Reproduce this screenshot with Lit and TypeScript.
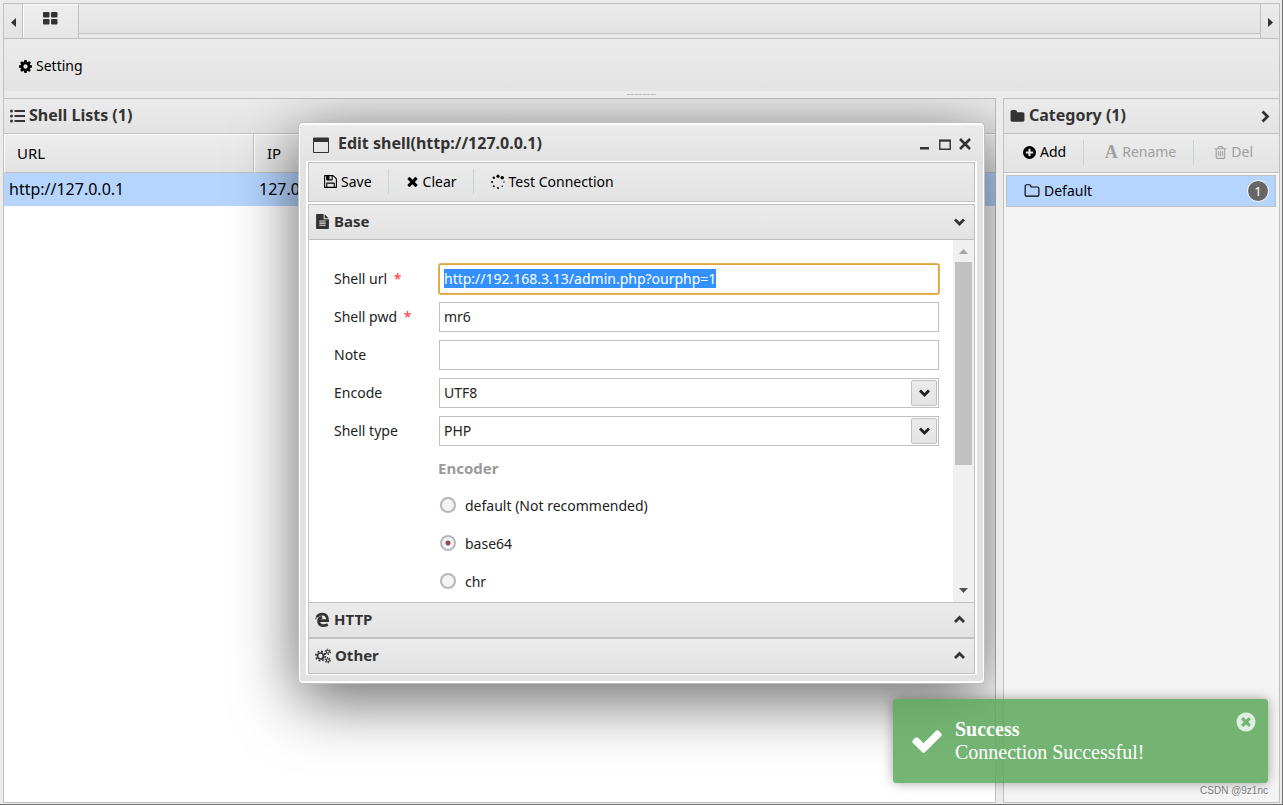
import { LitElement, html, css, svg } from "lit";
import { customElement, state, query } from "lit/decorators.js";

const DISC =
  "m387-226q0 209-103 385.5t-279.5 279.5-385.5 103-385.5-103-279.5-279.5-103-385.5 103-385.5 279.5-279.5 385.5-103 385.5 103 279.5 279.5 103 385.5z";

const PATHS: Record<string, string> = {
  cog: "M1152 896q0-106-75-181t-181-75-181 75-75 181 75 181 181 75 181-75 75-181zm512-109v222q0 12-8 23t-20 13l-185 28q-19 54-39 91 35 50 107 138 10 12 10 25t-9 23q-27 37-99 108t-94 71q-12 0-26-9l-138-108q-44 23-91 38-16 136-29 186-7 28-36 28h-222q-14 0-24.5-8.5t-11.5-21.5l-28-184q-49-16-90-37l-141 107q-10 9-25 9-14 0-25-11-126-114-165-168-7-10-7-23 0-12 8-23 15-21 51-66.5t54-70.5q-27-50-41-99l-183-27q-13-2-21-12.5t-8-23.5v-222q0-12 8-23t19-13l186-28q14-46 39-92-40-57-107-138-10-12-10-24 0-10 9-23 26-36 98.5-107.5t94.5-71.5q13 0 26 10l138 107q44-23 91-38 16-136 29-186 7-28 36-28h222q14 0 24.5 8.5t11.5 21.5l28 184q49 16 90 37l142-107q9-9 24-9 13 0 25 10 129 119 165 170 7 8 7 22 0 12-8 23-15 21-51 66.5t-54 70.5q26 50 41 98l183 28q13 2 21 12.5t8 23.5z",
  times: "M1490 1322q0 40-28 68l-136 136q-28 28-68 28t-68-28l-294-294-294 294q-28 28-68 28t-68-28l-136-136q-28-28-28-68t28-68l294-294-294-294q-28-28-28-68t28-68l136-136q28-28 68-28t68 28l294 294 294-294q28-28 68-28t68 28l136 136q28 28 28 68t-28 68l-294 294 294 294q28 28 28 68z",
  check: "M1671 566q0 40-28 68l-724 724-136 136q-28 28-68 28t-68-28l-136-136-362-362q-28-28-28-68t28-68l136-136q28-28 68-28t68 28l294 295 656-657q28-28 68-28t68 28l136 136q28 28 28 68z",
  folder: "M1728 608v704q0 92-66 158t-158 66h-1216q-92 0-158-66t-66-158v-960q0-92 66-158t158-66h320q92 0 158 66t66 158v32h672q92 0 158 66t66 158z",
  folderOpen: "M1600 1312v-704q0-40-28-68t-68-28h-704q-40 0-68-28t-28-68v-64q0-40-28-68t-68-28h-320q-40 0-68 28t-28 68v960q0 40 28 68t68 28h1216q40 0 68-28t28-68zm128-704v704q0 92-66 158t-158 66h-1216q-92 0-158-66t-66-158v-960q0-92 66-158t158-66h320q92 0 158 66t66 158v32h672q92 0 158 66t66 158z",
  plusCircle: "M1344 960v-128q0-26-19-45t-45-19h-256v-256q0-26-19-45t-45-19h-128q-26 0-45 19t-19 45v256h-256q-26 0-45 19t-19 45v128q0 26 19 45t45 19h256v256q0 26 19 45t45 19h128q26 0 45-19t19-45v-256h256q26 0 45-19t19-45zm320-64q0 209-103 385.5t-279.5 279.5-385.5 103-385.5-103-279.5-279.5-103-385.5 103-385.5 279.5-279.5 385.5-103 385.5 103 279.5 279.5 103 385.5z",
  timesCircle: "M1277 1122q0-26-19-45l-181-181 181-181q19-19 19-45 0-27-19-46l-90-90q-19-19-46-19-26 0-45 19l-181 181-181-181q-19-19-45-19-27 0-46 19l-90 90q-19 19-19 46 0 26 19 45l181 181-181 181q-19 19-19 45 0 27 19 46l90 90q19 19 46 19 26 0 45-19l181-181 181 181q19 19 45 19 27 0 46-19l90-90q19-19 19-46z" + DISC,
  trash: "M704 736v576q0 14-9 23t-23 9h-64q-14 0-23-9t-9-23v-576q0-14 9-23t23-9h64q14 0 23 9t9 23zm256 0v576q0 14-9 23t-23 9h-64q-14 0-23-9t-9-23v-576q0-14 9-23t23-9h64q14 0 23 9t9 23zm256 0v576q0 14-9 23t-23 9h-64q-14 0-23-9t-9-23v-576q0-14 9-23t23-9h64q14 0 23 9t9 23zm128 724v-948h-896v948q0 22 7 40.5t14.5 27 10.5 8.5h832q3 0 10.5-8.5t14.5-27 7-40.5zm-672-1076h448l-48-117q-7-9-17-11h-317q-10 2-17 11zm928 32v64q0 14-9 23t-23 9h-96v948q0 83-47 143.5t-113 60.5h-832q-66 0-113-58.5t-47-141.5v-952h-96q-14 0-23-9t-9-23v-64q0-14 9-23t23-9h309l70-167q15-37 54-63t79-26h320q40 0 79 26t54 63l70 167h309q14 0 23 9t9 23z",
  floppy: "M512 1536h768v-384h-768v384zm896 0h128v-896q0-14-10-38.5t-20-34.5l-281-281q-10-10-34-20t-39-10v416q0 40-28 68t-68 28h-576q-40 0-68-28t-28-68v-416h-128v1280h128v-416q0-40 28-68t68-28h832q40 0 68 28t28 68v416zm-384-928v-320q0-13-9.5-22.5t-22.5-9.5h-192q-13 0-22.5 9.5t-9.5 22.5v320q0 13 9.5 22.5t22.5 9.5h192q13 0 22.5-9.5t9.5-22.5zm640 32v928q0 40-28 68t-68 28h-1344q-40 0-68-28t-28-68v-1344q0-40 28-68t68-28h928q40 0 88 20t76 48l280 280q28 28 48 76t20 88z",
  fileText: "M1596 476q14 14 28 36h-472v-472q22 14 36 28zm-476 164h544v1056q0 40-28 68t-68 28h-1344q-40 0-68-28t-28-68v-1600q0-40 28-68t68-28h800v544q0 40 28 68t68 28zm160 736v-64q0-14-9-23t-23-9h-704q-14 0-23 9t-9 23v64q0 14 9 23t23 9h704q14 0 23-9t9-23zm0-256v-64q0-14-9-23t-23-9h-704q-14 0-23 9t-9 23v64q0 14 9 23t23 9h704q14 0 23-9t9-23zm0-256v-64q0-14-9-23t-23-9h-704q-14 0-23 9t-9 23v64q0 14 9 23t23 9h704q14 0 23-9t9-23z",
};

/** Solid icon on a 1792-unit grid. */
const icon = (name: string, size = 16) => html`<svg
  width=${size}
  height=${size}
  viewBox="0 0 1792 1792"
  fill="currentColor"
  aria-hidden="true"
>
  <path d=${PATHS[name]}></path>
</svg>`;

/** Thick chevron used by panel headers and drop-downs. */
const chevron = (dir: "up" | "down" | "right") => {
  const d = {
    up: "M2 9 L6.5 4.5 L11 9",
    down: "M2 4.5 L6.5 9 L11 4.5",
    right: "M4.5 1.5 L9.5 6.5 L4.5 11.5",
  }[dir];
  return html`<svg width="13" height="13" viewBox="0 0 13 13" fill="none" stroke="currentColor" stroke-width="2.8" aria-hidden="true">
    <path d=${d}></path>
  </svg>`;
};

const gear = (cx: number, cy: number, r: number, w: number, teeth: number) => {
  const step = (2 * Math.PI * (r + w)) / teeth;
  return svg`
    <circle cx=${cx} cy=${cy} r=${r} stroke-width=${w}></circle>
    <circle cx=${cx} cy=${cy} r=${r + w} stroke-width=${w} stroke-dasharray="${step / 2} ${step / 2}"></circle>`;
};

const cogsIcon = html`<svg width="16" height="16" viewBox="0 0 16 16" fill="none" stroke="currentColor" aria-hidden="true">
  ${gear(5.5, 8, 3, 1.7, 8)} ${gear(12.8, 3.8, 1.5, 1.1, 6)} ${gear(12.8, 12.2, 1.5, 1.1, 6)}
</svg>`;

const listIcon = html`<svg width="15" height="14" viewBox="0 0 15 14" fill="currentColor" aria-hidden="true">
  ${[2, 7, 12].map(
    (y) => svg`<circle cx="1.5" cy=${y} r="1.5"></circle><rect x="4.5" y=${y - 1} width="10.5" height="2"></rect>`
  )}
</svg>`;

const tilesIcon = html`<svg width="15" height="13" viewBox="0 0 15 13" fill="currentColor" aria-hidden="true">
  <rect x="0" y="0" width="6.5" height="5.5" rx="1"></rect>
  <rect x="8" y="0" width="6.5" height="5.5" rx="1"></rect>
  <rect x="0" y="7" width="6.5" height="5.5" rx="1"></rect>
  <rect x="8" y="7" width="6.5" height="5.5" rx="1"></rect>
</svg>`;

const spinnerIcon = html`<svg width="16" height="16" viewBox="0 0 16 16" fill="currentColor" aria-hidden="true">
  <circle cx="8" cy="2.2" r="1.6"></circle>
  <circle cx="12.2" cy="3.8" r="1.8"></circle>
  <circle cx="14" cy="8" r=".7"></circle>
  <circle cx="12.2" cy="12.2" r=".8"></circle>
  <circle cx="8" cy="13.9" r="1"></circle>
  <circle cx="3.8" cy="12.2" r="1"></circle>
  <circle cx="2.1" cy="8" r="1.1"></circle>
  <circle cx="3.8" cy="3.8" r="1.2"></circle>
</svg>`;

const browserIcon = html`<svg width="15" height="16" viewBox="0 0 15 16" fill="none" stroke="currentColor" aria-hidden="true">
  <path stroke-width="2.8" d="M4.2 8.6 H12.6 C12.8 4.6 10.8 2.2 7.6 2.2 C5 2.2 3.2 3.2 1.8 5"></path>
  <path stroke-width="2.8" d="M7 5 C4.4 6 3.4 7.8 3.6 9.6 C4 13.6 8.4 14.8 12.8 12.6"></path>
  <path stroke-width="1" d="M.7 7.4 C1 4.6 3.4 2.4 6 1.7"></path>
</svg>`;

const ENCODERS = ["default (Not recommended)", "base64", "chr"];

@customElement("app-root")
export class AppRoot extends LitElement {
  @state() private encoder = "base64";
  @state() private toastOpen = true;
  @query("#url") private urlField!: HTMLInputElement;

  static styles = css`
    :host {
      display: block;
      font: 14px/20px "Noto Sans", sans-serif;
      color: #000;
      --line: #c0c0c0;
      --bar: linear-gradient(#ebebeb, #e3e3e3);
      --select: #b5d5ff;
    }
    *, *::before, *::after { box-sizing: border-box; }
    button {
      font: inherit;
      color: inherit;
      background: none;
      border: 0;
      padding: 0;
      margin: 0;
      cursor: pointer;
    }
    svg { display: block; flex: none; }
    h1, h2 { margin: 0; font-size: 16px; line-height: 20px; font-weight: 700; color: #333; }

    .page {
      position: relative;
      display: flex;
      flex-direction: column;
      min-height: 100vh;
      padding: 3px 2px 1px 3px;
      background: #ebebeb;
      border-right: 1px solid #707070;
      border-bottom: 1px solid #707070;
    }

    .top { position: relative; z-index: 2; background: #ebebeb; border-right: 1px solid var(--line); border-left: 1px solid var(--line); }
    .tabs { display: flex; height: 36px; border-top: 1px solid var(--line); border-bottom: 1px solid var(--line); background: #e9e9e9; }
    .scroll { display: flex; align-items: center; justify-content: center; width: 19px; padding-top: 2px; color: #333; background: var(--bar); }
    .scroll.prev { border-right: 1px solid var(--line); }
    .scroll.next { border-left: 1px solid var(--line); }
    .tab { display: flex; justify-content: center; width: 56px; padding: 7px 2px 0 0; color: #333; background: linear-gradient(#ededed, #e6e6e6); border: 1px solid #fff; border-bottom: 0; border-right-color: var(--line); }
    .rail { flex: 1; height: 30px; background: var(--bar); border-bottom: 1px solid var(--line); }
    .ribbon { display: flex; align-items: center; height: 52px; padding: 2px 14px 0; background: var(--bar); }
    .setting { display: flex; align-items: center; gap: 3px; }
    .grip { display: flex; justify-content: center; align-items: center; height: 7px; background: #ebebeb; }
    .grip::before { content: ""; width: 29px; height: 1px; background: repeating-linear-gradient(90deg, #b8b8b8 0 3px, #dedede 3px 4px); }

    .main { display: flex; flex: 1; }
    .lists { flex: 1; min-width: 0; display: flex; flex-direction: column; background: #fff; border: 1px solid var(--line); }
    .side { position: relative; z-index: 2; display: flex; width: 284px; padding-left: 7px; background: #ebebeb; }
    .category { flex: 1; display: flex; flex-direction: column; background: #f4f4f4; border: 1px solid var(--line); }
    .head { display: flex; align-items: center; gap: 4px; height: 35px; padding: 0 8px 0 6px; color: #333; background: var(--bar); border-bottom: 1px solid var(--line); }
    .head h2 { padding-bottom: 2px; }
    .head .fold { margin-left: auto; }

    table { width: 100%; border-collapse: separate; border-spacing: 0; table-layout: fixed; font-size: 15px; line-height: 20px; }
    th, td { text-align: left; font-weight: 400; }
    th { height: 39px; padding: 0 0 1px 12px; background: linear-gradient(#ededed, #e3e3e3); border-top: 1px solid #fff; border-bottom: 1px solid var(--line); border-left: 1px solid #fff; }
    th.url { width: 250px; border-right: 1px solid var(--line); }
    td { height: 33px; padding: 0 5px 1px; font-size: 16px; background: var(--select); }

    .tools { display: flex; align-items: center; height: 39px; background: var(--bar); border-bottom: 1px solid var(--line); }
    .tools button { display: flex; align-items: center; gap: 3px; height: 25px; padding: 0 16px 0 17px; border-right: 1px solid #c7d3da; }
    .tools button:last-child { border-right: 0; }
    .tools button:disabled { color: #a0a0a0; cursor: default; }
    .tools .letter { width: 16px; text-align: center; font: 700 18px/20px "Liberation Serif", serif; }
    .category .tools { padding-bottom: 2px; }
    .category .tools button { padding: 0 17px 0 19px; }
    .category .tools button:first-child { padding-left: 18px; }
    .tree { margin: 0; padding: 1px 3px 1px 2px; list-style: none; border-top: 1px solid #fff; }
    .tree button { display: flex; align-items: center; gap: 4px; width: 100%; height: 32px; padding: 0 6px 0 17px; background: var(--select); border: 1px solid var(--line); }
    .count { display: grid; place-items: center; width: 22px; height: 22px; margin-left: auto; font-size: 13px; line-height: 13px; color: #fff; background: #666; border: 1px solid #fff; border-radius: 50%; }

    .layer { position: absolute; inset: 0; z-index: 1; display: flex; align-items: center; justify-content: center; padding: 1px 0 0 1px; pointer-events: none; }
    .window {
      width: 687px;
      max-width: 100%;
      pointer-events: auto;
      padding: 0 7px 8px;
      background: #e2e2e2;
      border: 1px solid var(--line);
      border-radius: 5px;
      box-shadow: inset 0 0 0 1px #fff, inset 0 2px #fff, inset 0 -2px #fff, 0 16px 64px rgba(0, 0, 0, 0.6);
    }
    .title { display: flex; align-items: center; gap: 9px; height: 36px; margin: 2px -5px 0; padding: 4px 11px 0 12px; color: #333; background: linear-gradient(#ebebeb, #e3e3e3); }
    .title h1 { padding-bottom: 3px; }
    .controls { display: flex; gap: 8px; margin-left: auto; }
    .frame { padding: 1px 2px; background: #fff; }
    .bar { height: 40px; margin-bottom: 2px; border: 1px solid var(--line); }
    .bar button { padding-left: 16px; }
    .bar button:first-child { padding-left: 14px; }
    .fold-head { height: 36px; padding-right: 8px; border: 1px solid var(--line); }
    .fold-head h2 { font-size: 15px; }
    .body { display: flex; height: 362px; background: #fff; border: 1px solid var(--line); border-width: 0 1px; overflow: hidden; }
    .form { flex: 1; min-width: 0; padding: 20px 14px 0 25px; }
    .row { display: grid; grid-template-columns: 105px 1fr; align-items: center; height: 38px; color: #222; }
    legend, .option { padding-bottom: 2px; }
    .req { margin-left: 3px; color: #f33; }
    .field { width: 100%; height: 30px; margin: 0; padding: 0 4px; font: inherit; color: #222; background: #fff; border: 1px solid var(--line); border-radius: 0; outline: 0; }
    .field:focus { border-color: #dfa43a; border-radius: 2px; box-shadow: 0 0 0 1px #e5b45a; }
    .field::selection { color: #fff; background: #3390ff; }
    .combo { position: relative; display: block; }
    .combo select { appearance: none; }
    .combo .drop { position: absolute; right: 2px; top: 2px; display: grid; place-items: center; width: 26px; height: 26px; background: var(--bar); border: 1px solid var(--line); border-radius: 2px; pointer-events: none; }
    fieldset { margin: 0 0 0 105px; padding: 0; border: 0; }
    legend { display: flex; align-items: center; height: 38px; padding-left: 0; padding-right: 0; margin-left: -1px; font-size: 15px; font-weight: 700; color: #999; }
    .option { display: flex; align-items: center; gap: 9px; height: 38px; color: #222; }
    .option input { appearance: none; width: 16px; height: 16px; margin: 0 0 2px 1px; background: #f4f4f4; border: 2px solid #bbb5b7; border-radius: 50%; }
    .option input:checked { background: radial-gradient(circle, #94454b 2px, #f3f3f5 3px); border-color: #b5b8c2; }
    .scrollbar { display: flex; flex: none; flex-direction: column; align-items: center; width: 21px; background: #f0f0f0; color: #505050; }
    .scrollbar svg { height: 22px; }
    .scrollbar .up { color: #a3a3a3; }
    .thumb { width: 17px; height: 203px; margin-bottom: auto; background: #c1c1c1; }

    .toast {
      position: absolute;
      z-index: 3;
      right: 14px;
      bottom: 21px;
      display: flex;
      gap: 11px;
      width: 375px;
      padding: 19px 11px 19px 17px;
      font: 20px/23px "Liberation Serif", serif;
      color: #fff;
      background: rgba(92, 168, 92, 0.85);
      border-radius: 3px;
      box-shadow: 0 0 12px rgba(0, 0, 0, 0.35);
    }
    .toast p, .toast strong { display: block; margin: 0; }
    .toast .tick { align-self: center; }
    .toast .dismiss { align-self: flex-start; margin: -7px 0 0 auto; color: #e0efe0; }
    .credit { position: absolute; z-index: 3; right: 14px; bottom: 5px; font: 10px/16px "Liberation Sans", sans-serif; color: #777; text-shadow: 1px 1px 1px #fff; }
  `;

  protected firstUpdated() {
    this.urlField.focus();
    this.urlField.select();
  }

  private renderFold(glyph: unknown, title: string, open: boolean) {
    return html`<div class="head fold-head">
      ${glyph}
      <h2>${title}</h2>
      <button class="fold" aria-label="Toggle ${title}" aria-expanded=${open}>${chevron(open ? "down" : "up")}</button>
    </div>`;
  }

  private renderSelect(id: string, label: string, value: string) {
    return html`<div class="row">
      <label for=${id}>${label}</label>
      <span class="combo">
        <select class="field" id=${id}><option>${value}</option></select>
        <span class="drop">${chevron("down")}</span>
      </span>
    </div>`;
  }

  private renderForm() {
    return html`<form class="form" @submit=${(e: Event) => e.preventDefault()}>
      <div class="row">
        <label for="url">Shell url <span class="req">*</span></label>
        <input class="field" id="url" type="text" value="http://192.168.3.13/admin.php?ourphp=1" />
      </div>
      <div class="row">
        <label for="pwd">Shell pwd <span class="req">*</span></label>
        <input class="field" id="pwd" type="text" value="mr6" />
      </div>
      <div class="row">
        <label for="note">Note</label>
        <input class="field" id="note" type="text" />
      </div>
      ${this.renderSelect("encode", "Encode", "UTF8")} ${this.renderSelect("type", "Shell type", "PHP")}
      <fieldset>
        <legend>Encoder</legend>
        ${ENCODERS.map(
          (name) => html`<label class="option">
            <input
              type="radio"
              name="encoder"
              .checked=${this.encoder === name}
              @change=${() => (this.encoder = name)}
            />${name}
          </label>`
        )}
      </fieldset>
    </form>`;
  }

  private renderWindow() {
    return html`<div class="layer">
      <section class="window" role="dialog" aria-labelledby="window-title">
        <header class="title">
          <svg width="16" height="16" viewBox="0 0 16 16" fill="none" stroke="currentColor" aria-hidden="true">
            <path d="M.5 1 H15.5 V15.5 H.5 Z"></path>
            <path stroke-width="4" d="M0 3 H16"></path>
          </svg>
          <h1 id="window-title">Edit shell(http://127.0.0.1)</h1>
          <div class="controls">
            <button aria-label="Minimize">
              <svg width="12" height="13" viewBox="0 0 12 13"><path fill="currentColor" d="M1 9h9v2.5H1z"></path></svg>
            </button>
            <button aria-label="Maximize">
              <svg width="12" height="13" viewBox="0 0 12 13" fill="none" stroke="currentColor">
                <path stroke-width="1.4" d="M.8 2.5 H11.2 V11.2 H.8 Z"></path>
                <path stroke-width="2" d="M0 2.6 H12"></path>
              </svg>
            </button>
            <button aria-label="Close">
              <svg width="12" height="13" viewBox="0 0 12 13" fill="none" stroke="currentColor" stroke-width="2.6">
                <path d="M1 1 L11 11 M11 1 L1 11"></path>
              </svg>
            </button>
          </div>
        </header>
        <div class="frame">
          <div class="tools bar">
            <button>${icon("floppy", 15)}Save</button>
            <button>${icon("times", 15)}Clear</button>
            <button>${spinnerIcon}Test Connection</button>
          </div>
          ${this.renderFold(icon("fileText", 15), "Base", true)}
          <div class="body">
            ${this.renderForm()}
            <div class="scrollbar" aria-hidden="true">
              <svg class="up" width="9" viewBox="0 0 9 22" fill="currentColor"><path d="M4.5 9 L9 14 H0 Z"></path></svg>
              <div class="thumb"></div>
              <svg width="9" viewBox="0 0 9 22" fill="currentColor"><path d="M4.5 13 L9 8 H0 Z"></path></svg>
            </div>
          </div>
          ${this.renderFold(browserIcon, "HTTP", false)} ${this.renderFold(cogsIcon, "Other", false)}
        </div>
      </section>
    </div>`;
  }

  render() {
    return html`<div class="page">
      <header class="top">
        <nav class="tabs">
          <button class="scroll prev" aria-label="Scroll tabs left">
            <svg width="5" height="9" viewBox="0 0 5 9" fill="currentColor"><path d="M5 0 V9 L0 4.5 Z"></path></svg>
          </button>
          <button class="tab" aria-label="Home">${tilesIcon}</button>
          <div class="rail"></div>
          <button class="scroll next" aria-label="Scroll tabs right">
            <svg width="5" height="9" viewBox="0 0 5 9" fill="currentColor"><path d="M0 0 V9 L5 4.5 Z"></path></svg>
          </button>
        </nav>
        <div class="ribbon"><button class="setting">${icon("cog", 15)}Setting</button></div>
        <div class="grip"></div>
      </header>

      <main class="main">
        <section class="lists">
          <div class="head">${listIcon}<h2>Shell Lists (1)</h2></div>
          <table>
            <thead>
              <tr><th class="url">URL</th><th>IP</th></tr>
            </thead>
            <tbody>
              <tr><td>http://127.0.0.1</td><td>127.0.0.1</td></tr>
            </tbody>
          </table>
        </section>
        <aside class="side">
          <section class="category">
            <div class="head">
              ${icon("folder", 15)}
              <h2>Category (1)</h2>
              <button class="fold" aria-label="Collapse category">${chevron("right")}</button>
            </div>
            <div class="tools">
              <button>${icon("plusCircle", 15)}Add</button>
              <button disabled><span class="letter" aria-hidden="true">A</span>Rename</button>
              <button disabled>${icon("trash", 15)}Del</button>
            </div>
            <ul class="tree">
              <li><button>${icon("folderOpen")}Default<span class="count">1</span></button></li>
            </ul>
          </section>
        </aside>
      </main>

      ${this.renderWindow()}
      ${this.toastOpen
        ? html`<div class="toast" role="status">
            <span class="tick">${icon("check", 34)}</span>
            <div>
              <strong>Success</strong>
              <p>Connection Successful!</p>
            </div>
            <button class="dismiss" aria-label="Dismiss" @click=${() => (this.toastOpen = false)}>
              ${icon("timesCircle", 22)}
            </button>
          </div>`
        : null}
      <span class="credit">CSDN @9z1nc</span>
    </div>`;
  }
}
